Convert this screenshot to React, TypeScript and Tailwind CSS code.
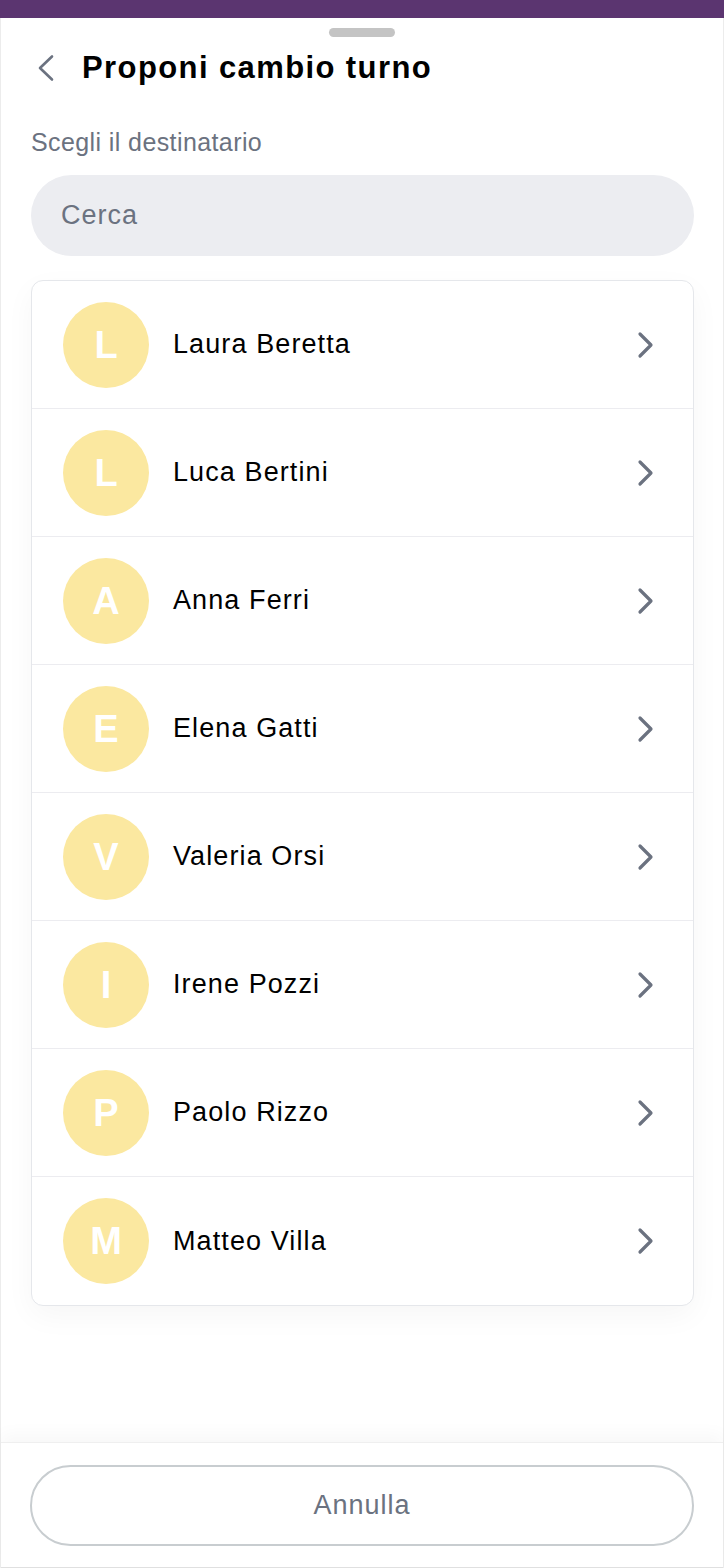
const people = [
  "Laura Beretta",
  "Luca Bertini",
  "Anna Ferri",
  "Elena Gatti",
  "Valeria Orsi",
  "Irene Pozzi",
  "Paolo Rizzo",
  "Matteo Villa",
];

function BackIcon() {
  return (
    <svg width="20" height="28" viewBox="0 0 20 28" fill="none" className="text-[#6b7280]">
      <polyline points="16,2.5 4,14 16,25.5" stroke="currentColor" strokeWidth="2.6" strokeLinecap="round" strokeLinejoin="round" />
    </svg>
  );
}

function NextIcon() {
  return (
    <svg width="20" height="28" viewBox="0 0 20 28" fill="none" className="text-[#6b7280]">
      <polyline points="4,3 15,14 4,25" stroke="currentColor" strokeWidth="3.2" strokeLinecap="round" strokeLinejoin="round" />
    </svg>
  );
}

export default function App() {
  return (
    <div
      className="w-[724px] h-[1568px] bg-[#5b3570] flex flex-col"
      style={{ fontFamily: '"Liberation Sans", Arial, sans-serif' }}
    >
      <div className="mt-[18px] flex-1 bg-white flex flex-col border-x border-[#ececec]">
        {/* grab handle */}
        <div className="flex justify-center pt-[10px]">
          <div className="w-[66px] h-[9px] rounded-full bg-[#c4c4c4]" />
        </div>

        <div className="flex-1 flex flex-col px-[29px]">
          {/* header */}
          <div className="flex items-center h-[48px] mt-[7px]">
            <div className="ml-[6px]">
              <BackIcon />
            </div>
            <h1 className="ml-[26px] text-[31px] font-bold text-black tracking-[1.4px]">
              Proponi cambio turno
            </h1>
          </div>

          <p className="mt-[35px] ml-[1px] text-[25px] text-[#6b7280] leading-[30px] tracking-[0.4px]">
            Scegli il destinatario
          </p>

          {/* search */}
          <div className="mt-[18px] ml-[1px] h-[81px] rounded-full bg-[#ecedf1] flex items-center px-[30px]">
            <span className="text-[27px] text-[#6b7280] tracking-[1px]">Cerca</span>
          </div>

          {/* list */}
          <div className="mt-[24px] ml-[1px] rounded-[12px] border border-[#e5e7eb] bg-white shadow-[0_10px_30px_rgba(0,0,0,0.04)] overflow-hidden">
            {people.map((name, i) => (
              <div
                key={name}
                className={`h-[128px] flex items-center pl-[31px] pr-[37px] ${
                  i < people.length - 1 ? "border-b border-[#ececf0]" : ""
                }`}
              >
                <div className="w-[86px] h-[86px] rounded-full bg-[#fbe8a0] flex items-center justify-center">
                  <span className="text-white text-[38px] font-bold leading-none">{name[0]}</span>
                </div>
                <span className="ml-[24px] flex-1 text-[27px] text-black tracking-[1.1px]">{name}</span>
                <NextIcon />
              </div>
            ))}
          </div>
        </div>

        {/* footer */}
        <div className="border-t border-[#efefef] shadow-[0_-8px_16px_rgba(0,0,0,0.03)] px-[29px] pt-[22px] pb-[21px] border-b border-b-[#e0e0e0]">
          <button className="w-full h-[81px] rounded-full border-2 border-[#c8cdd0] bg-white flex items-center justify-center">
            <span className="text-[27px] text-[#6b7280] tracking-[1px]">Annulla</span>
          </button>
        </div>
      </div>
    </div>
  );
}
